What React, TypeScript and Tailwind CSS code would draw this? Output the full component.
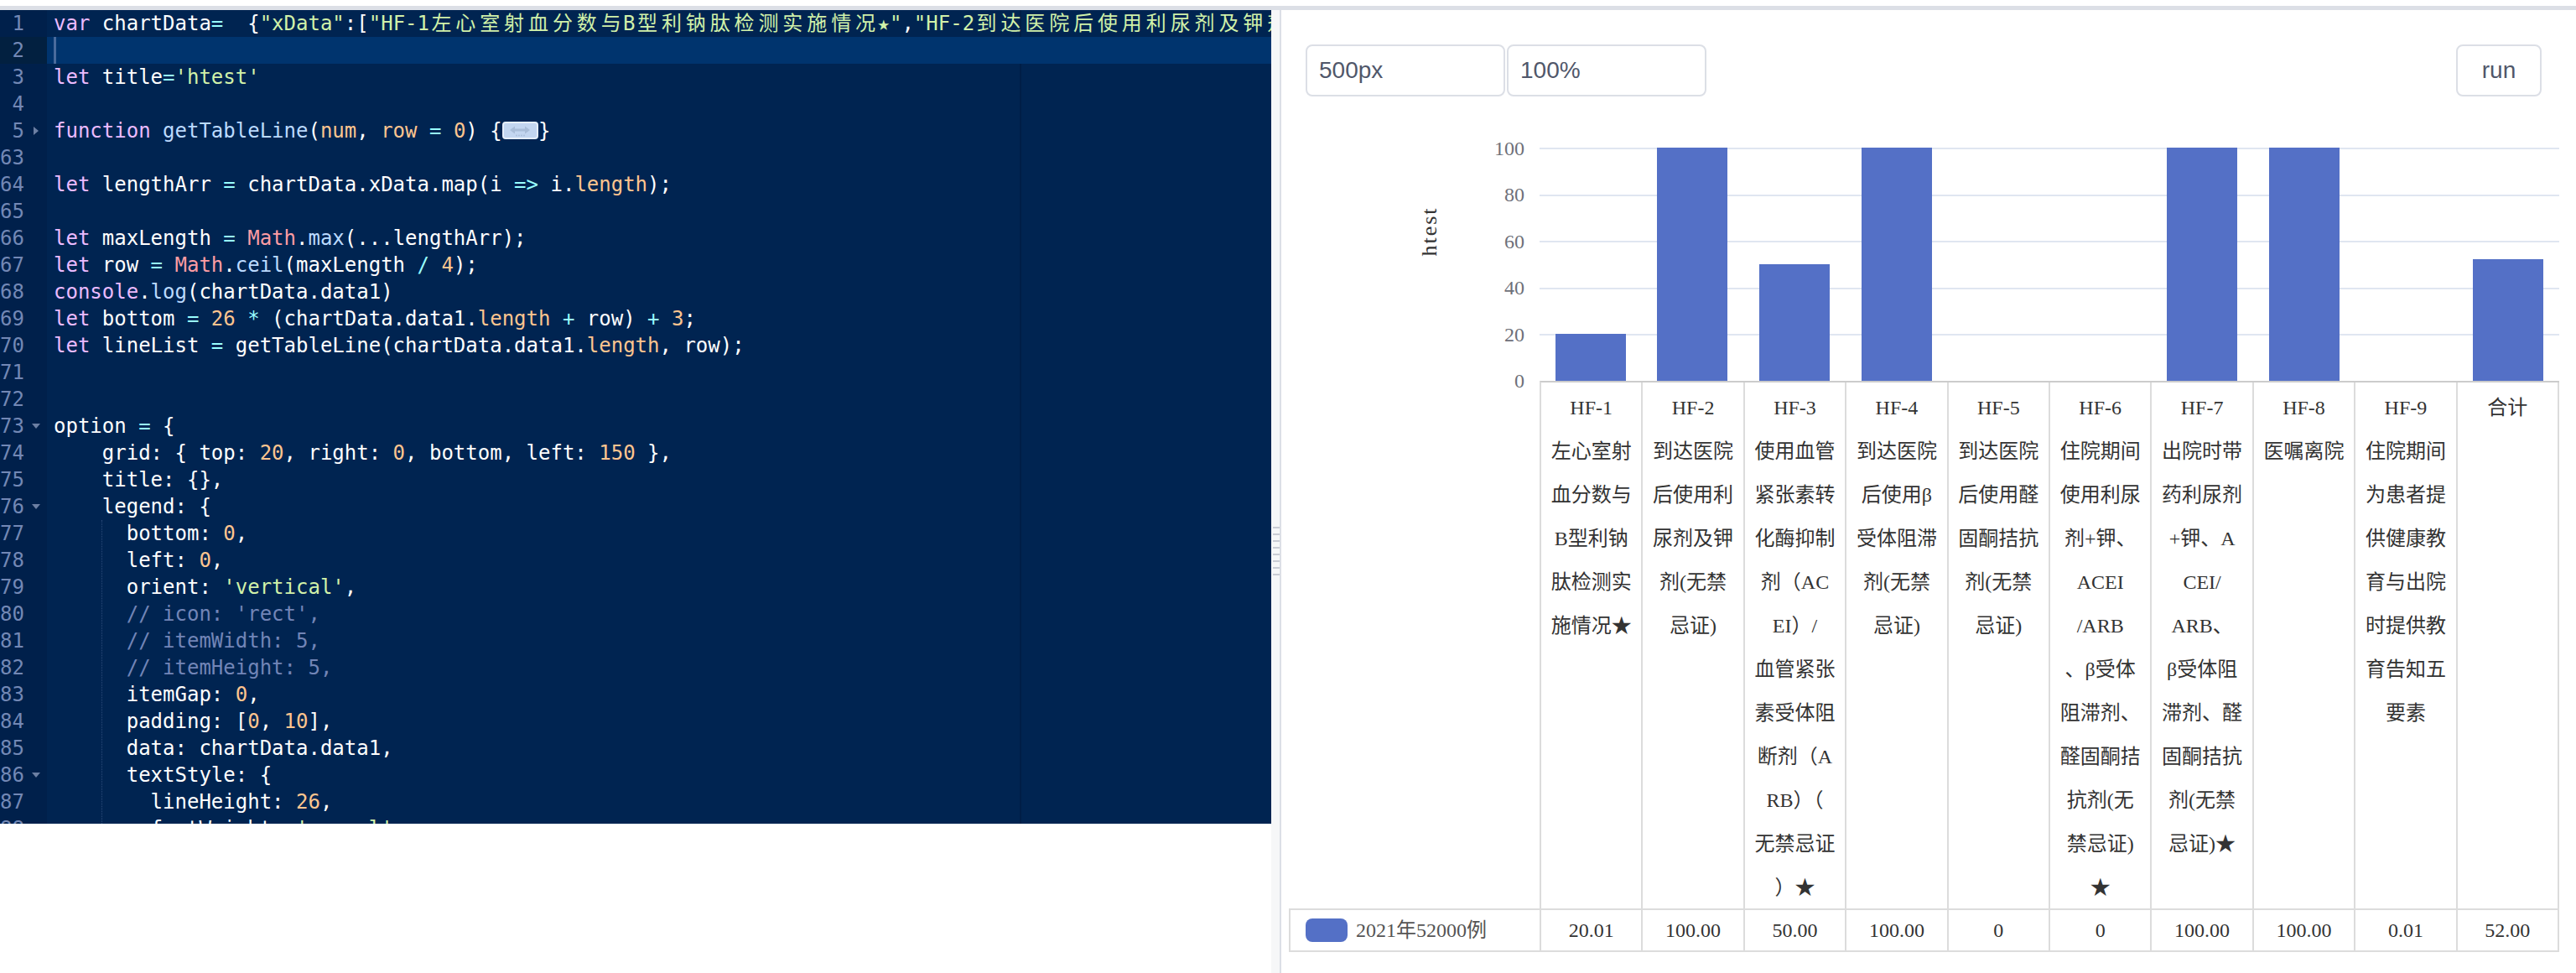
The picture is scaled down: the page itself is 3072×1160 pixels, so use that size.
import React from "react";

type Tok = [string, string?];

const K = "text-[#ebbbff]";
const S = "text-[#d1f1a9]";
const N = "text-[#ffc58f]";
const O = "text-[#99ffff]";
const F = "text-[#bbdaff]";
const V = "text-[#ff9da4]";
const C = "text-[#7285b7]";

function isWide(ch: string) {
  const c = ch.codePointAt(0) || 0;
  return (c >= 0x2e80 && c <= 0x9fff) || (c >= 0xff00 && c <= 0xffef) || (c >= 0x3000 && c <= 0x303f);
}

function renderText(t: string) {
  const out: React.ReactNode[] = [];
  let buf = "";
  Array.from(t).forEach((ch, i) => {
    if (isWide(ch)) {
      if (buf) {
        out.push(buf);
        buf = "";
      }
      out.push(
        <span key={i} className="inline-block w-[2ch] text-center">
          {ch}
        </span>
      );
    } else buf += ch;
  });
  if (buf) out.push(buf);
  return out;
}

type Line = { n: number; fold?: "open" | "closed"; toks: Tok[] };

const FOLD = "__FOLD__";

const lines: Line[] = [
  {
    n: 1,
    toks: [
      ["var", K],
      [" chartData"],
      ["=", O],
      ["  {"],
      ['"xData"', S],
      [":["],
      ['"HF-1左心室射血分数与B型利钠肽检测实施情况★"', S],
      [","],
      ['"HF-2到达医院后使用利尿剂及钾剂(无禁忌证)"', S],
      [","],
      ['"HF-3使用血管紧张素转化酶抑制剂"', S],
    ],
  },
  { n: 2, toks: [] },
  { n: 3, toks: [["let", K], [" title"], ["=", O], ["'htest'", S]] },
  { n: 4, toks: [] },
  {
    n: 5,
    fold: "closed",
    toks: [
      ["function", K],
      [" "],
      ["getTableLine", F],
      ["("],
      ["num", N],
      [", "],
      ["row", N],
      [" "],
      ["=", O],
      [" "],
      ["0", N],
      [") {"],
      [FOLD],
      ["}"],
    ],
  },
  { n: 63, toks: [] },
  {
    n: 64,
    toks: [
      ["let", K],
      [" lengthArr "],
      ["=", O],
      [" chartData.xData.map(i "],
      ["=>", O],
      [" i."],
      ["length", N],
      [");"],
    ],
  },
  { n: 65, toks: [] },
  {
    n: 66,
    toks: [["let", K], [" maxLength "], ["=", O], [" "], ["Math", V], ["."], ["max", F], ["(...lengthArr);"]],
  },
  {
    n: 67,
    toks: [
      ["let", K],
      [" row "],
      ["=", O],
      [" "],
      ["Math", V],
      ["."],
      ["ceil", F],
      ["(maxLength "],
      ["/", O],
      [" "],
      ["4", N],
      [");"],
    ],
  },
  { n: 68, toks: [["console", K], ["."], ["log", F], ["(chartData.data1)"]] },
  {
    n: 69,
    toks: [
      ["let", K],
      [" bottom "],
      ["=", O],
      [" "],
      ["26", N],
      [" "],
      ["*", O],
      [" (chartData.data1."],
      ["length", N],
      [" "],
      ["+", O],
      [" row) "],
      ["+", O],
      [" "],
      ["3", N],
      [";"],
    ],
  },
  {
    n: 70,
    toks: [["let", K], [" lineList "], ["=", O], [" getTableLine(chartData.data1."], ["length", N], [", row);"]],
  },
  { n: 71, toks: [] },
  { n: 72, toks: [] },
  { n: 73, fold: "open", toks: [["option "], ["=", O], [" {"]] },
  {
    n: 74,
    toks: [["    grid: { top: "], ["20", N], [", right: "], ["0", N], [", bottom, left: "], ["150", N], [" },"]],
  },
  { n: 75, toks: [["    title: {},"]] },
  { n: 76, fold: "open", toks: [["    legend: {"]] },
  { n: 77, toks: [["      bottom: "], ["0", N], [","]] },
  { n: 78, toks: [["      left: "], ["0", N], [","]] },
  { n: 79, toks: [["      orient: "], ["'vertical'", S], [","]] },
  { n: 80, toks: [["      "], ["// icon: 'rect',", C]] },
  { n: 81, toks: [["      "], ["// itemWidth: 5,", C]] },
  { n: 82, toks: [["      "], ["// itemHeight: 5,", C]] },
  { n: 83, toks: [["      itemGap: "], ["0", N], [","]] },
  { n: 84, toks: [["      padding: ["], ["0", N], [", "], ["10", N], ["],"]] },
  { n: 85, toks: [["      data: chartData.data1,"]] },
  { n: 86, fold: "open", toks: [["      textStyle: {"]] },
  { n: 87, toks: [["        lineHeight: "], ["26", N], [","]] },
  { n: 88, toks: [["        fontWeight: "], ["'normal'", S], [","]] },
];

function FoldPlaceholder() {
  return (
    <span className="inline-flex w-[3ch] h-[21px] align-middle items-center justify-center rounded-[4px] border-2 border-[#e6eefa] bg-[#c3d6f0] mb-[3px]">
      <svg width="26" height="14" viewBox="0 0 26 14">
        <path d="M1 6 L7 1.5 L7 4.5 L19 4.5 L19 1.5 L25 6 L19 10.5 L19 7.5 L7 7.5 L7 10.5 Z" fill="#a9bdd8" />
        <circle cx="9" cy="12.5" r="0.9" fill="#a9bdd8" />
        <circle cx="12" cy="12.5" r="0.9" fill="#a9bdd8" />
        <circle cx="15" cy="12.5" r="0.9" fill="#a9bdd8" />
        <circle cx="18" cy="12.5" r="0.9" fill="#a9bdd8" />
      </svg>
    </span>
  );
}

function Editor() {
  return (
    <div className="h-[970px] w-[1516px] flex bg-[#002451] overflow-hidden font-['DejaVu_Sans_Mono','Noto_Sans_CJK_SC',monospace] text-[24px] leading-[32px] text-white">
      <div className="w-[56px] shrink-0 bg-[#00204b] text-[#7388b5]">
        {lines.map((l, i) => (
          <div
            key={l.n}
            className={
              i === 1
                ? "relative h-[32px] pr-[27px] text-right bg-[#022040]"
                : "relative h-[32px] pr-[27px] text-right"
            }
          >
            {l.n}
            {l.fold === "closed" && (
              <svg className="absolute left-[40px] top-[11px]" width="6" height="10" viewBox="0 0 6 10">
                <path d="M0 0 L6 5 L0 10 Z" fill="#6c7fa3" />
              </svg>
            )}
            {l.fold === "open" && (
              <svg className="absolute left-[38px] top-[13px]" width="10" height="6" viewBox="0 0 10 6">
                <path d="M0 0 L10 0 L5 6 Z" fill="#6c7fa3" />
              </svg>
            )}
          </div>
        ))}
      </div>
      <div className="relative flex-1 overflow-hidden">
        <div className="absolute left-[1160px] top-0 bottom-0 w-[2px] bg-[#001e46]" />
        <div className="absolute left-[65px] top-[608px] bottom-0 w-0 border-l border-dotted border-[#2c4a78]" />
        {lines.map((l, i) => (
          <div
            key={l.n}
            className={
              i === 1
                ? "relative h-[32px] pl-[8px] whitespace-pre bg-[#00346e]"
                : "relative h-[32px] pl-[8px] whitespace-pre"
            }
          >
            {i === 1 && <div className="absolute left-[8px] top-0 h-[32px] w-[3px] bg-[#4a6b9c]" />}
            {l.toks.map((t, j) =>
              t[0] === FOLD ? (
                <FoldPlaceholder key={j} />
              ) : (
                <span key={j} className={t[1]}>
                  {renderText(t[0])}
                </span>
              )
            )}
          </div>
        ))}
      </div>
    </div>
  );
}

function Splitter() {
  return (
    <div className="w-[12px] shrink-0 flex">
      <div className="w-[10px] bg-[#f6f7f8] pt-[616px] flex flex-col items-end gap-[6px]">
        {[0, 1, 2, 3, 4, 5, 6, 7].map((i) => (
          <div key={i} className="h-[2px] w-[8px] bg-[#c9ccd4]" />
        ))}
      </div>
      <div className="w-[2px] bg-[#dcdfe6]" />
    </div>
  );
}

type Cat = { v: number; d: string; lines: string[] };

const cats: Cat[] = [
  { v: 20.01, d: "20.01", lines: ["HF-1", "左心室射", "血分数与", "B型利钠", "肽检测实", "施情况★"] },
  { v: 100, d: "100.00", lines: ["HF-2", "到达医院", "后使用利", "尿剂及钾", "剂(无禁", "忌证)"] },
  {
    v: 50,
    d: "50.00",
    lines: [
      "HF-3",
      "使用血管",
      "紧张素转",
      "化酶抑制",
      "剂（AC",
      "EI）/",
      "血管紧张",
      "素受体阻",
      "断剂（A",
      "RB）（",
      "无禁忌证",
      "）★",
    ],
  },
  { v: 100, d: "100.00", lines: ["HF-4", "到达医院", "后使用β", "受体阻滞", "剂(无禁", "忌证)"] },
  { v: 0, d: "0", lines: ["HF-5", "到达医院", "后使用醛", "固酮拮抗", "剂(无禁", "忌证)"] },
  {
    v: 0,
    d: "0",
    lines: [
      "HF-6",
      "住院期间",
      "使用利尿",
      "剂+钾、",
      "ACEI",
      "/ARB",
      "、β受体",
      "阻滞剂、",
      "醛固酮拮",
      "抗剂(无",
      "禁忌证)",
      "★",
    ],
  },
  {
    v: 100,
    d: "100.00",
    lines: [
      "HF-7",
      "出院时带",
      "药利尿剂",
      "+钾、A",
      "CEI/",
      "ARB、",
      "β受体阻",
      "滞剂、醛",
      "固酮拮抗",
      "剂(无禁",
      "忌证)★",
    ],
  },
  { v: 100, d: "100.00", lines: ["HF-8", "医嘱离院"] },
  {
    v: 0.01,
    d: "0.01",
    lines: ["HF-9", "住院期间", "为患者提", "供健康教", "育与出院", "时提供教", "育告知五", "要素"],
  },
  { v: 52, d: "52.00", lines: ["合计"] },
];

function Chart() {
  return (
    <div className="ml-[8px] mt-[22px] w-[1516px] h-[1000px] pt-[39px] flex flex-col font-['Liberation_Serif','Noto_Sans_CJK_SC',serif] text-[24px]">
      <div className="flex h-[278px]">
        <div className="relative w-[300px] h-full">
          <div className="absolute left-[169px] top-[100px] -translate-x-1/2 -translate-y-1/2 -rotate-90 text-[26px] tracking-[2px] text-[#333] leading-none whitespace-nowrap">
            htest
          </div>
          <div className="h-full flex flex-col justify-between pt-[1px] text-[#6e7079]">
            {["100", "80", "60", "40", "20", "0"].map((t) => (
              <div key={t} className="h-0 flex items-center justify-end pr-[18px] leading-none">
                {t}
              </div>
            ))}
          </div>
        </div>
        <div className="relative w-[1216px] h-full">
          <div className="absolute inset-0 flex flex-col">
            {[0, 1, 2, 3, 4].map((i) => (
              <div key={i} className="h-[55.6px] border-t-2 border-[#e0e6f1]" />
            ))}
          </div>
          <div className="absolute inset-0 grid grid-cols-10">
            {cats.map((c, i) => (
              <div key={i} className="flex items-end justify-center">
                <div className="w-[84px] bg-[#5470c6]" style={{ height: `${(c.v / 100) * 278}px` }} />
              </div>
            ))}
          </div>
        </div>
      </div>
      <div className="flex h-[629px]">
        <div className="w-[300px]" />
        <div className="w-[1216px] grid grid-cols-10 border-l-2 border-t-2 border-l-[#dcdcdc] border-t-[#cccccc] text-[#333]">
          {cats.map((c, i) => (
            <div key={i} className="flex flex-col items-center pt-[4px] border-r-2 border-[#dcdcdc]">
              {c.lines.map((t, j) => (
                <div key={j} className="h-[52px] leading-[52px] whitespace-nowrap">
                  {t}
                </div>
              ))}
            </div>
          ))}
        </div>
      </div>
      <div className="flex h-[52px] ml-[1px]">
        <div className="w-[299px] flex items-center pl-[18px] gap-[10px] border-l-2 border-y-2 border-[#dcdcdc]">
          <div className="w-[50px] h-[28px] rounded-[8px] bg-[#5470c6]" />
          <div className="text-[#555] whitespace-nowrap">2021年52000例</div>
        </div>
        <div className="w-[1216px] grid grid-cols-10 border-l-2 border-y-2 border-[#dcdcdc] text-[#333]">
          {cats.map((c, i) => (
            <div key={i} className="flex items-center justify-center border-r-2 border-[#dcdcdc]">
              {c.d}
            </div>
          ))}
        </div>
      </div>
    </div>
  );
}

function RightPanel() {
  return (
    <div className="flex-1 flex flex-col bg-white">
      <div className="mt-[41px] ml-[29px] mr-[41px] flex justify-between font-['Liberation_Sans',sans-serif] text-[28px] text-[#50576a]">
        <div className="flex gap-[2px]">
          <div className="w-[238px] h-[62px] rounded-[8px] border-2 border-[#dcdfe6] flex items-center pl-[14px]">
            500px
          </div>
          <div className="w-[238px] h-[62px] rounded-[8px] border-2 border-[#dcdfe6] flex items-center pl-[14px]">
            100%
          </div>
        </div>
        <div className="w-[102px] h-[62px] rounded-[8px] border-2 border-[#dcdfe6] flex items-center justify-center">
          run
        </div>
      </div>
      <Chart />
    </div>
  );
}

export default function App() {
  return (
    <div className="w-[3072px] h-[1160px] bg-white flex flex-col overflow-hidden">
      <div className="h-[7px] bg-white shrink-0" />
      <div className="h-[5px] bg-[#dcdfe6] shrink-0" />
      <div className="flex flex-1 min-h-0">
        <div className="w-[1516px] shrink-0 flex flex-col bg-white">
          <Editor />
        </div>
        <Splitter />
        <RightPanel />
      </div>
    </div>
  );
}
